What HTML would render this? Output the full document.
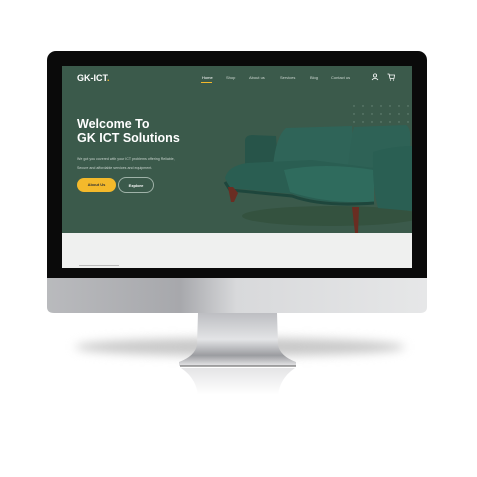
<!DOCTYPE html>
<html><head><style>
*{margin:0;padding:0;box-sizing:border-box}
body{width:477px;height:477px;background:#fff;position:relative;overflow:hidden;font-family:"Liberation Sans",sans-serif}
.a{position:absolute}
</style></head><body>
<div class="a" style="left:75px;top:338px;width:330px;height:18px;border-radius:50%;background:#c8c8c8;filter:blur(5px)"></div>
<svg class="a" style="left:0;top:0" width="477" height="477">
<defs>
<linearGradient id="st" x1="0" y1="0" x2="0" y2="1"><stop offset="0" stop-color="#bdbec2"/><stop offset=".5" stop-color="#e3e4e6"/><stop offset=".8" stop-color="#9b9ca0"/><stop offset="1" stop-color="#e8e8ea"/></linearGradient>
<linearGradient id="ch" x1="0" y1="0" x2="1" y2="0"><stop offset="0" stop-color="#b9babd"/><stop offset=".35" stop-color="#a7a8ac"/><stop offset=".5" stop-color="#d8d9db"/><stop offset="1" stop-color="#e6e7e8"/></linearGradient>
<linearGradient id="rf" x1="0" y1="0" x2="0" y2="1"><stop offset="0" stop-color="#e4e4e6"/><stop offset="1" stop-color="#fff"/></linearGradient>
</defs>
<path d="M198 313 L277 313 L278 345 Q280 356 296 362 L296 366 L179 366 L179 362 Q195 356 197 345 Z" fill="url(#st)"/>
<path d="M180 366 L296 366" stroke="#555" stroke-width="1"/>
<path d="M181 368 L295 368 Q280 378 278 395 L198 395 Q196 378 181 368Z" fill="url(#rf)"/>
<path d="M47 276 L427 276 L427 307 Q427 313 420 313 L54 313 Q47 313 47 307Z" fill="url(#ch)"/>
</svg>
<div class="a" style="left:47px;top:51px;width:380px;height:227px;background:#0a0a0a;border-radius:9px 9px 0 0"></div>
<div class="a" style="left:62px;top:66px;width:350px;height:202px;background:#eff0ef;overflow:hidden">
 <div class="a" style="left:0;top:0;width:350px;height:167px;background:#3b5a4b"></div>
 <div class="a" style="left:15px;top:7px;color:#fff;font-weight:bold;font-size:9px">GK-ICT<span style="color:#f4b92b">.</span></div>
 <div class="a" style="top:9px;left:140px;font-size:4px;color:#cfd9d3;white-space:nowrap">
  <span style="position:absolute;left:0;color:#fff">Home</span>
  <span style="position:absolute;left:-1px;top:7px;width:11px;height:1px;background:#f4b92b"></span>
  <span style="position:absolute;left:24px">Shop</span>
  <span style="position:absolute;left:47px">About us</span>
  <span style="position:absolute;left:78px">Services</span>
  <span style="position:absolute;left:108px">Blog</span>
  <span style="position:absolute;left:129px">Contact us</span>
 </div>
 <svg class="a" style="left:309px;top:7px" width="8" height="8"><circle cx="4" cy="2.5" r="1.6" fill="none" stroke="#fff" stroke-width=".8"/><path d="M1 7 Q4 3.5 7 7" fill="none" stroke="#fff" stroke-width=".8"/></svg>
 <svg class="a" style="left:325px;top:7px" width="8" height="8"><path d="M0.5 1 H2 L3 5.5 H7 L7.5 2 H2.5" fill="none" stroke="#fff" stroke-width=".8"/><circle cx="3.5" cy="7" r=".6" fill="#fff"/><circle cx="6.5" cy="7" r=".6" fill="#fff"/></svg>
 <svg class="a" style="left:290px;top:38px" width="60" height="20"><g fill="#6f8a7d">
 <circle cx="2" cy="2" r=".7"/><circle cx="11" cy="2" r=".7"/><circle cx="20" cy="2" r=".7"/><circle cx="29" cy="2" r=".7"/><circle cx="38" cy="2" r=".7"/><circle cx="47" cy="2" r=".7"/><circle cx="56" cy="2" r=".7"/>
 <circle cx="2" cy="10" r=".7"/><circle cx="11" cy="10" r=".7"/><circle cx="20" cy="10" r=".7"/><circle cx="29" cy="10" r=".7"/><circle cx="38" cy="10" r=".7"/><circle cx="47" cy="10" r=".7"/><circle cx="56" cy="10" r=".7"/>
 <circle cx="2" cy="18" r=".7"/><circle cx="11" cy="18" r=".7"/><circle cx="20" cy="18" r=".7"/><circle cx="29" cy="18" r=".7"/><circle cx="38" cy="18" r=".7"/><circle cx="47" cy="18" r=".7"/><circle cx="56" cy="18" r=".7"/></g></svg>
 <div class="a" style="left:15px;top:51px;color:#fff;font-weight:bold;font-size:12.5px;line-height:14px">Welcome To<br>GK ICT Solutions</div>
 <div class="a" style="left:15px;top:89px;color:#c9d4ce;font-size:3.6px;line-height:9px;width:130px">We got you covered with your ICT problems offering Reliable,<br>Secure and affordable services and equipment.</div>
 <div class="a" style="left:15px;top:112px;width:39px;height:14px;border-radius:7px;background:#f4b92b;color:#333;font-size:4px;font-weight:bold;text-align:center;line-height:14px">About Us</div>
 <div class="a" style="left:56px;top:111px;width:36px;height:16px;border-radius:8px;border:.6px solid #9fb2a8;color:#fff;font-size:4px;font-weight:bold;text-align:center;line-height:15px">Explore</div>
 <svg class="a" style="left:0;top:0" width="350" height="167">
  <ellipse cx="270" cy="150" rx="90" ry="10" fill="#34523f"/>
  <!-- left arm -->
  <path d="M183 74 Q184 69 190 69 L214 70 L216 98 L183 98 Z" fill="#275449"/>
  <!-- back cushions -->
  <path d="M211 100 Q214 70 224 62 L290 60 Q292 80 290 102 Z" fill="#2f6458"/>
  <path d="M286 102 Q288 78 292 61 L344 59 Q350 62 348 82 L345 102 Z" fill="#2e6256"/>
  <!-- seat -->
  <path d="M163 112 Q166 100 185 97 L250 94 L312 102 L312 135 Q260 140 230 128 L168 122 Z" fill="#2a5e52"/>
  <path d="M222 104 Q262 96 312 104 L312 136 Q265 138 228 126 Z" fill="#2f6b5d"/>
  <path d="M163 116 L168 124 L230 130 Q260 141 312 137" stroke="#1e463c" stroke-width="3" fill="none"/>
  <!-- right arm -->
  <path d="M311 86 Q330 80 350 80 L350 145 L316 142 Q310 120 311 86Z" fill="#2a5f53"/>
  <!-- legs -->
  <path d="M166 121 L171 121 L176 127 L172 136 L169 136Z" fill="#6a2d22"/>
  <path d="M290 141 L297 141 L296 167 L293 167Z" fill="#6a2d22"/>
 </svg>
 <div class="a" style="left:17px;top:199px;width:40px;height:1px;background:#bbb"></div>
</div>
</body></html>
